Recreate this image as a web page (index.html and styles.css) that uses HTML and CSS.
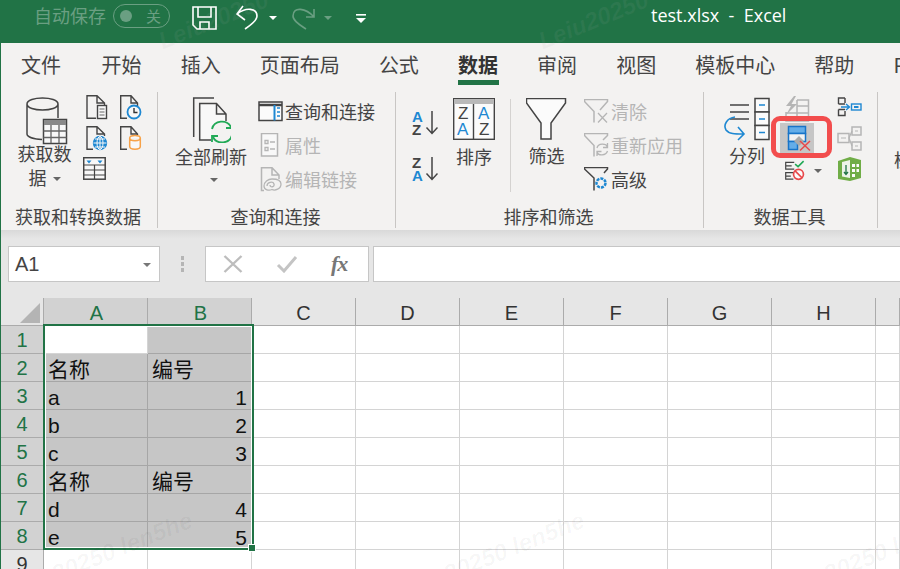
FILE: index.html
```html
<!DOCTYPE html>
<html lang="zh-CN">
<head>
<meta charset="utf-8">
<title>test.xlsx - Excel</title>
<link rel="stylesheet" href="styles.css">
</head>
<body>
<div class="app">
  <header class="titlebar">
    <span class="autosave">自动保存</span>
    <span class="toggle"><i class="toggle-dot"></i><span class="toggle-text">关</span></span>
    <svg class="qa-save" width="25" height="25" viewBox="192 6 25 25" fill="none" stroke="#fff" stroke-width="1.6"><path d="M193 7H216V29H197L193 25Z M198 7V17H211V7 M200 29V22H209V29"/></svg>
    <svg class="qa-undo" width="23" height="25" viewBox="236 5 23 25" fill="none" stroke="#fff" stroke-width="1.6"><path d="M243 6L237 14L245 20M237 14C246 7 257 8 257 16C257 20 251 25 245 29"/></svg>
    <i class="caret caret-white qa-c1"></i>
    <svg class="qa-redo" width="24" height="25" viewBox="291 5 24 25" fill="none" stroke="#6a9f82" stroke-width="1.6"><path d="M313 9V17H305M313 17C305 8 292 6 292 16C292 21 299 25 305 29"/></svg>
    <i class="caret caret-faint qa-c2"></i>
    <svg class="qa-more" width="10" height="9" viewBox="0 0 10 9"><rect width="10" height="1.6" fill="#fff"/><path d="M0 4H10L5 9Z" fill="#fff"/></svg>
    <span class="doc-title">test.xlsx  -  Excel</span>
  </header>

  <div class="shell">
    <nav class="tabs">
      <span>文件</span><span>开始</span><span>插入</span><span>页面布局</span><span>公式</span><span class="tab-on">数据</span><span>审阅</span><span>视图</span><span>模板中心</span><span>帮助</span><span>Power Pivot</span>
    </nav>

    <section class="ribbon">
      <div class="group g1">
        <div class="group-body">
          <div class="big big-get">
            <svg width="44" height="48" viewBox="27 97 44 48" fill="none" stroke="#444" stroke-width="1.5">
              <path d="M29 104C29 96 60 96 60 104C60 112 29 112 29 104ZM29 104V134C29 137 36 139 44 139.500M60 104V118"/>
              <rect x="45.500" y="119.500" width="23" height="24" fill="#f8f8f8"/>
              <rect x="46" y="120" width="22" height="5" fill="#8a8a8a" stroke="none"/>
              <path d="M45.500 131H68.500M45.500 137.500H68.500M53 125V143M61 125V143" stroke="#666" stroke-width="1.300"/>
            </svg>
            <span class="big-label narrow">获取数据<i class="caret caret-in"></i></span>
          </div>
          <div class="small-grid">
            <svg width="24" height="25" viewBox="85 95 24 25" fill="none" stroke="#444" stroke-width="1.4"><path d="M96 118.300H87V95.700H97L104.500 103V105M97 95.700V103H104.500"/><rect x="97.500" y="105.500" width="9" height="13" fill="#f8f8f8"/><path d="M99.500 109H104.500M99.500 112H104.500M99.500 115H104.500" stroke-width="1.100" stroke="#666"/></svg>
            <svg width="24" height="25" viewBox="119 95 24 25" fill="none" stroke="#444" stroke-width="1.4"><path d="M127 118.300H120.700V95.700H131L137.500 103V106M131 95.700V103H137.500"/><circle cx="134" cy="112" r="6.500" stroke="#1e88d2" stroke-width="1.800" fill="#f8f8f8"/><path d="M134 108V112.500H137.500" stroke="#333"/></svg>
            <svg width="24" height="25" viewBox="85 126 24 25" fill="none" stroke="#444" stroke-width="1.4"><path d="M93 149.300H87V126.700H97L104.500 134V136M97 126.700V134H104.500"/><circle cx="100" cy="143" r="6.500" fill="#1e88d2" stroke="#1e88d2"/><path d="M93.500 143H106.500M100 136.500V149.500M95 139H105M95 147H105" stroke="#f8f8f8" stroke-width="1"/><ellipse cx="100" cy="143" rx="3" ry="6.500" stroke="#f8f8f8" stroke-width="1"/></svg>
            <svg width="24" height="25" viewBox="119 126 24 25" fill="none" stroke="#444" stroke-width="1.4"><path d="M127 149.300H120.700V126.700H131L137.500 134V135M131 126.700V134H137.500"/><path d="M129.700 138C129.700 134.500 140.300 134.500 140.300 138V146.500C140.300 150 129.700 150 129.700 146.500ZM129.700 138C129.700 141.500 140.300 141.500 140.300 138" stroke="#f7a248" stroke-width="1.500" fill="#f8f8f8"/></svg>
            <svg class="small-wide" width="24" height="24" viewBox="83 157 24 24" fill="none" stroke="#444" stroke-width="1.500"><rect x="83.700" y="157.700" width="21.500" height="21.500" fill="#f8f8f8"/><path d="M83.700 165H105.200M83.700 170H105.200M83.700 175H105.200M94.500 165V179" stroke-width="1.200"/><path d="M86.500 160.500H91.500L89 163.500ZM97.500 160.500H102.500L100 163.500Z" fill="#1e88d2" stroke="none"/></svg>
          </div>
        </div>
        <div class="group-label">获取和转换数据</div>
      </div>

      <div class="group g2">
        <div class="group-body">
          <div class="big big-refresh">
            <svg width="40" height="46" viewBox="192 97 40 46" fill="none" stroke="#444" stroke-width="1.500">
              <path d="M215 98H194.700V137"/>
              <path d="M212 140H200.700V103.500H217.500L227 114V121M217.500 103.500V114H227" fill="#f8f8f8"/>
              <circle cx="223" cy="132" r="11" fill="#f3f2f1" stroke="none"/>
              <path d="M213 129C215 120 228 119 232 127M233 135C231 144 218 145 214 137" stroke="#21a956" stroke-width="1.800"/>
              <path d="M233 122V128H227M213 142V136H219" stroke="#21a956" stroke-width="1.800"/>
            </svg>
            <span class="big-label">全部刷新</span>
            <i class="caret caret-big"></i>
          </div>
          <div class="rows">
            <div class="row"><svg width="26" height="21" viewBox="258 101 26 21" fill="none" stroke="#444" stroke-width="1.500"><rect x="259" y="102" width="23" height="18.500" fill="#fbfbfb"/><path d="M259 105H282" stroke-width="2.500"/><path d="M274.500 105V120.500" stroke="#1e88d2" stroke-width="2"/><path d="M277 108H280M277 112H280M277 116H280" stroke="#1e88d2" stroke-width="1.500"/></svg><span>查询和连接</span></div>
            <div class="row row-off"><svg width="26" height="24" viewBox="258 134 26 24" fill="none" stroke="#b5b5b5" stroke-width="1.500"><rect x="261.500" y="134.500" width="16" height="22.500" fill="#f8f8f8"/><path d="M265 141.500H268V144.500H265ZM265 148.500H268V151.500H265ZM270 143H275M270 150H275" stroke-width="1.300"/></svg><span>属性</span></div>
            <div class="row row-off"><svg width="26" height="25" viewBox="258 168 26 25" fill="none" stroke="#b5b5b5" stroke-width="1.500"><path d="M264 191.500H261.500V168.700H272L279 176V180M272 168.700V176H279"/><path d="M267 187C267 183 273 182 274 185C275 188 270 189 270 186M281 185C281 190 275 192 272 190.500C269 192 264 191 264 187C264 183 268 180 272 180C277 180 281 181 281 185" stroke-width="1.300"/></svg><span>编辑链接</span></div>
          </div>
        </div>
        <div class="group-label">查询和连接</div>
      </div>

      <div class="group g3">
        <div class="group-body">
          <div class="sort-stack">
            <svg width="26" height="26" viewBox="0 0 26 26"><text x="0" y="12" class="svg-az az-blue">A</text><text x="0" y="24.500" class="svg-az az-dark">Z</text><path d="M20 1V23M14.500 17.500L20 23.500L25.500 17.500" fill="none" stroke="#444" stroke-width="1.500"/></svg>
            <svg width="26" height="26" viewBox="0 0 26 26"><text x="0" y="12" class="svg-az az-dark">Z</text><text x="0" y="24.500" class="svg-az az-blue">A</text><path d="M20 1V23M14.500 17.500L20 23.500L25.500 17.500" fill="none" stroke="#444" stroke-width="1.500"/></svg>
          </div>
          <div class="big big-sort">
            <svg width="42" height="42" viewBox="0 0 42 42"><rect x=".7" y=".7" width="40.600" height="40.600" fill="#fbfbfb" stroke="#444" stroke-width="1.400"/><rect x="1" y="1" width="40" height="5" fill="#b9b9b9"/><path d="M20.500 6V41" stroke="#444" stroke-width="1.400"/><text x="5" y="21" class="svg-za az-dark">Z</text><text x="4" y="37" class="svg-za az-blue">A</text><text x="25" y="21" class="svg-za az-blue">A</text><text x="26" y="37" class="svg-za az-dark">Z</text></svg>
            <span class="big-label">排序</span>
          </div>
          <i class="inner-sep"></i>
          <div class="big big-filter">
            <svg width="41" height="42" viewBox="526 98 41 42" fill="#fbfbfb" stroke="#444" stroke-width="1.500"><path d="M526.500 98.500H565.500V103L551 123V139H541V123L526.500 103Z"/></svg>
            <span class="big-label">筛选</span>
          </div>
          <div class="rows rows-filter">
            <div class="row row-off"><svg width="25" height="25" viewBox="584 99 25 25" fill="none" stroke="#b5b5b5" stroke-width="1.500"><path d="M594 122.500V111.500L584.500 101.500V99.500H607.500V101.500L600 110"/><path d="M598 113L607 122.500M607 113L598 122.500" stroke-width="1.300"/></svg><span>清除</span></div>
            <div class="row row-off"><svg width="25" height="25" viewBox="584 133 25 25" fill="none" stroke="#b5b5b5" stroke-width="1.500"><path d="M594 156.500V145.500L584.500 135.500V133.500H607.500V135.500L603 140"/><path d="M597 148C598 143 606 143 607.500 147M607.500 151C606 156 598 156 597 152M607.500 143V147.500H603M597 156V151.500H601.500" stroke-width="1.300"/></svg><span>重新应用</span></div>
            <div class="row"><svg width="25" height="25" viewBox="584 168 25 25" fill="none" stroke="#444" stroke-width="1.500"><path d="M594 191.500V179L584.500 170V168.500H607.500V170L604 174"/><circle cx="601" cy="184" r="4.500" stroke="#1e88d2" stroke-width="2.500" stroke-dasharray="3 1"/></svg><span>高级</span></div>
          </div>
        </div>
        <div class="group-label">排序和筛选</div>
      </div>

      <div class="group g4">
        <div class="group-body">
          <div class="big big-split">
            <svg width="48" height="44" viewBox="723 97 48 44" fill="none" stroke="#444" stroke-width="1.500">
              <path d="M730 105H749M730 112H749M730 119H749" stroke-width="1.400"/>
              <rect x="755" y="98.500" width="14" height="13.500" fill="#fbfbfb"/><rect x="755" y="112" width="14" height="13.500" fill="#fbfbfb"/><rect x="755" y="125.500" width="14" height="14" fill="#fbfbfb"/>
              <path d="M759 105H765M759 119H765M759 132.500H765" stroke="#1e88d2"/>
              <path d="M735 117C727 118 723 125 726 130C729 134 735 134 743 134M738 127L744 134L738 140" stroke="#1e88d2" stroke-width="1.600"/>
            </svg>
            <span class="big-label">分列</span>
          </div>
          <div class="tool-col">
            <svg class="tool" width="34" height="26" viewBox="780 96 34 26" fill="none" stroke="#b5b5b5" stroke-width="1.500"><path d="M797 100H808.500V121H786V112M786 113H808.500M797 100V121M808.500 106H797" /><path d="M794 96L786 106H791L786 115L797 104H791.500L796 96Z" fill="#b5b5b5" stroke="none"/></svg>
            <div class="tool-on">
              <svg width="34" height="30" viewBox="780 123 34 30" fill="none" stroke="#1874c8" stroke-width="1.500"><rect x="788.500" y="126.500" width="17" height="7" fill="#64ade8"/><rect x="788.500" y="133.500" width="17" height="8" fill="#f2f2f2"/><rect x="788.500" y="141.500" width="9" height="8" fill="#64ade8"/><path d="M794 141L799 136L804 141L799 146Z" fill="#aaa" stroke="none"/><path d="M800 141L810 150.500M810 141L800 150.500" stroke="#e8484a" stroke-width="1.500"/></svg>
            </div>
            <div class="tool-split">
              <svg width="34" height="23" viewBox="784 159 34 23" fill="none" stroke="#444" stroke-width="1.400"><path d="M796 161H786V169H796M786 165H793M796 173H786V180.500H795M786 177H792"/><path d="M797 163L800.500 166L807 159.500" stroke="#21a956" stroke-width="1.800"/><circle cx="801" cy="175" r="5.800" stroke="#e8484a" stroke-width="2" fill="#fbfbfb"/><path d="M797 171L805 179" stroke="#e8484a" stroke-width="2"/></svg>
              <i class="caret caret-tool"></i>
            </div>
          </div>
          <div class="tool-col tool-col2">
            <svg width="25" height="21" viewBox="837 96 25 21" fill="none" stroke="#444" stroke-width="1.400"><path d="M845 98H838.500V104M845 98M838.500 109.500V115.500H845V111M845 103V98M838.500 104H845M838.500 109.500H845"/><rect x="851.500" y="104" width="9.500" height="6" stroke="#1e88d2"/><rect x="854" y="106" width="4.500" height="2" fill="#1e88d2" stroke="none"/><path d="M841 107H849M846 104L849.500 107L846 110" stroke="#1e88d2"/></svg>
            <svg width="25" height="25" viewBox="837 126 25 25" fill="none" stroke="#b5b5b5" stroke-width="1.500"><rect x="838" y="133.500" width="11" height="9"/><rect x="852" y="127" width="9" height="8"/><rect x="852" y="142" width="9" height="8"/><path d="M841 138H846M855 131H858M855 146H858M849 138L852 131M849 138L852 146" stroke-width="1.200"/></svg>
            <svg class="tool-model" width="25" height="25" viewBox="837 157 25 25"><path d="M838 161L850 157L861 160V178L850 181L838 179Z" fill="#70ad47"/><path d="M842 162L850 160V178L842 176.500Z" fill="#fbfbfb" opacity=".9"/><path d="M846 165V174M844 172L846 174.500L848 172" fill="none" stroke="#217346" stroke-width="1.300"/><path d="M852 164H855V167H852ZM856.500 164H859V167H856.500ZM852 169H855V172H852ZM856.500 169H859V172H856.500ZM852 174H855V177H852Z" fill="#fbfbfb"/></svg>
          </div>
        </div>
        <div class="group-label">数据工具</div>
        <i class="callout"></i>
      </div>

      <div class="group g5">
        <div class="group-body"><span class="big-label next-label">模拟分析</span></div>
      </div>
    </section>

    <section class="formula">
      <div class="namebox"><span>A1</span><i class="caret caret-name"></i></div>
      <div class="grip"><i></i><i></i><i></i></div>
      <div class="fxbox">
        <svg width="24" height="18" viewBox="0 0 24 18" fill="none" stroke="#bdbdbd" stroke-width="2.400"><path d="M3.500 1L20.500 17M20.500 1L3.500 17"/></svg>
        <svg width="24" height="18" viewBox="0 0 24 18" fill="none" stroke="#c4c4c4" stroke-width="3"><path d="M3 10L9 16L21 2"/></svg>
        <span class="fx">fx</span>
      </div>
      <div class="input"></div>
    </section>

    <section class="sheet-wrap">
      <div class="sheet">
        <div class="hd corner"><svg width="20" height="20" viewBox="0 0 20 20"><path d="M20 0V20H0Z" fill="#b4b4b4"/></svg></div>
        <div class="hd col on">A</div><div class="hd col on">B</div><div class="hd col">C</div><div class="hd col">D</div><div class="hd col">E</div><div class="hd col">F</div><div class="hd col">G</div><div class="hd col">H</div><div class="hd col"></div>

        <div class="hd rowh on">1</div><div class="c"></div><div class="c sel"></div><div class="c"></div><div class="c"></div><div class="c"></div><div class="c"></div><div class="c"></div><div class="c"></div><div class="c"></div>
        <div class="hd rowh on">2</div><div class="c sel cjk">名称</div><div class="c sel cjk">编号</div><div class="c"></div><div class="c"></div><div class="c"></div><div class="c"></div><div class="c"></div><div class="c"></div><div class="c"></div>
        <div class="hd rowh on">3</div><div class="c sel">a</div><div class="c sel num">1</div><div class="c"></div><div class="c"></div><div class="c"></div><div class="c"></div><div class="c"></div><div class="c"></div><div class="c"></div>
        <div class="hd rowh on">4</div><div class="c sel">b</div><div class="c sel num">2</div><div class="c"></div><div class="c"></div><div class="c"></div><div class="c"></div><div class="c"></div><div class="c"></div><div class="c"></div>
        <div class="hd rowh on">5</div><div class="c sel">c</div><div class="c sel num">3</div><div class="c"></div><div class="c"></div><div class="c"></div><div class="c"></div><div class="c"></div><div class="c"></div><div class="c"></div>
        <div class="hd rowh on">6</div><div class="c sel cjk">名称</div><div class="c sel cjk">编号</div><div class="c"></div><div class="c"></div><div class="c"></div><div class="c"></div><div class="c"></div><div class="c"></div><div class="c"></div>
        <div class="hd rowh on">7</div><div class="c sel">d</div><div class="c sel num">4</div><div class="c"></div><div class="c"></div><div class="c"></div><div class="c"></div><div class="c"></div><div class="c"></div><div class="c"></div>
        <div class="hd rowh on">8</div><div class="c sel">e</div><div class="c sel num">5</div><div class="c"></div><div class="c"></div><div class="c"></div><div class="c"></div><div class="c"></div><div class="c"></div><div class="c"></div>
        <div class="hd rowh">9</div><div class="c"></div><div class="c"></div><div class="c"></div><div class="c"></div><div class="c"></div><div class="c"></div><div class="c"></div><div class="c"></div><div class="c"></div>
      </div>
      <div class="selection"><i class="handle"></i></div>
    </section>
  </div>

  <span class="wm wm1">Leiu20250</span>
  <span class="wm wm2">Leiu20250</span>
  <span class="wm wm3">20250 len5he</span>
  <span class="wm wm4">20250 len5he</span>
  <span class="wm wm5">20250 len5he</span>
</div>
</body>
</html>
```
FILE: styles.css
```css
* { box-sizing: border-box; }
html, body { margin: 0; padding: 0; background: #fff; }
body { font-family: "Noto Sans CJK SC", "Liberation Sans", sans-serif; }
i { display: block; font-style: normal; }

.app { position: relative; width: 900px; height: 569px; overflow: hidden; }

/* title bar */
.titlebar { display: flex; align-items: center; height: 43px; padding: 0 0 1px 35px; background: #217346; color: #fff; }
.autosave { font-size: 18px; color: #6a9f82; line-height: 24px; margin: 0 0 12px -1px; }
.toggle { display: flex; align-items: center; justify-content: space-between; width: 57px; height: 24px; margin: 0 0 10px 7px; padding: 0 8px 0 6px; border: 1px solid #6a9f82; border-radius: 12px; }
.toggle-dot { width: 12px; height: 12px; border-radius: 50%; background: #6a9f82; }
.toggle-text { font-size: 15px; color: #6a9f82; line-height: 20px; }
.qa-save { margin: 0 0 5px 22px; }
.qa-undo { margin: 0 0 7px 19px; }
.qa-c1 { margin: 0 0 6px 10px; }
.qa-redo { margin: 0 0 7px 15px; }
.qa-c2 { margin: 0 0 6px 8px; }
.qa-more { margin: 0 0 6px 24px; }
.doc-title { margin: 0 0 12px 285px; font: 18px/24px "Open Sans", "Liberation Sans", sans-serif; white-space: pre; }

.caret { width: 0; height: 0; border-style: solid; border-width: 4px 4px 0; border-color: #666 transparent transparent; }
.caret-white { border-top-color: #fff; }
.caret-faint { border-top-color: #6a9f82; }

/* shell */
.shell { border-left: 1px solid #217346; }

.tabs { display: flex; gap: 39.100px; height: 47px; padding: 8px 0 0 20px; background: #f3f2f1; font-size: 20px; line-height: 28px; color: #444; white-space: nowrap; }
.tabs span { flex: none; position: relative; height: 34px; }
.tabs span:first-child { margin-right: 1.500px; }
.tab-on { font-weight: 700; color: #333; }
.tab-on::after { content: ""; position: absolute; left: 0; right: -1px; bottom: 0; height: 5px; background: #217346; }

/* ribbon */
.ribbon { display: flex; height: 140px; background: #f3f2f1; color: #444; font-size: 18px; }
.group { position: relative; display: flex; flex-direction: column; flex: none; height: 136px; margin-top: 2px; border-right: 1px solid #c8c6c4; }
.g1 { width: 157px; }
.g2 { width: 238px; }
.g3 { width: 308px; }
.g4 { width: 174px; }
.g5 { width: 22px; border-right: 0; }
.group-body { display: flex; flex: 1; min-height: 0; }
.group-label { height: 24px; padding-right: 2px; text-align: center; line-height: 24px; font-size: 18px; white-space: nowrap; color: #444; }

.big { display: flex; flex-direction: column; align-items: center; flex: none; }
.big-label { display: block; line-height: 24px; text-align: center; }

.big-get { width: 62px; margin: 5px 0 0 13px; }
.big-get svg { margin-left: 3px; }
.big-get .big-label { margin-top: -4px; margin-left: -1px; }
.narrow { width: 56px; }
.caret-in { display: inline-block; margin: 0 0 3px 6px; vertical-align: middle; }

.small-grid { display: grid; grid-template-columns: 34px 34px; grid-auto-rows: 31px; margin: 3px 0 0 9px; }
.small-wide { margin-left: -2px; }

.big-refresh { width: 80px; margin: 5px 0 0 13px; }
.big-refresh .big-label { margin-top: 1px; }
.caret-big { margin: 10px 0 0 6px; }

.rows { display: flex; flex-direction: column; margin: 2px 0 0 7px; }
.row { display: flex; align-items: center; height: 34px; white-space: nowrap; color: #444; }
.row svg { flex: none; }
.row span { margin-left: 1px; }
.row-off { color: #b5b5b5; }

.sort-stack { display: flex; flex-direction: column; gap: 20px; margin: 18px 0 0 16px; }
.svg-az { font: 700 15px "Liberation Sans", sans-serif; }
.svg-za { font: 400 17px "Liberation Sans", sans-serif; }
.az-blue { fill: #1e88d2; }
.az-dark { fill: #444; }

.big-sort { margin: 6px 0 0 15px; }
.big-sort .big-label { margin-top: 4px; }
.inner-sep { width: 1px; height: 93px; margin: 7px 0 0 15px; background: #d4d2d0; }
.big-filter { width: 41px; margin: 6px 0 0 15px; }
.big-filter .big-label { margin-top: 3px; }
.rows-filter { margin: 2px 0 0 17px; }
.rows-filter .row span { margin-left: 2px; }

.big-split { width: 52px; margin: 5px 0 0 17px; }
.big-split .big-label { margin-top: 2px; }
.tool-col { display: flex; flex-direction: column; margin: 4px 0 0 7px; width: 42px; }
.tool { margin-bottom: 1px; }
.tool-on { width: 34px; height: 30px; background: #c6c6c6; }
.tool-on svg { display: block; }
.tool-split { display: flex; align-items: center; margin: 6px 0 0 4px; }
.caret-tool { margin-left: 1px; border-top-color: #666; }
.tool-col2 { margin: 4px 0 0 15px; width: 26px; gap: 9px; }
.tool-model { margin-top: -3px; }
.callout { position: absolute; left: 67px; top: 24px; width: 61px; height: 42px; border: 5px solid #f24d4d; border-radius: 9px; }
.next-label { margin: 55px 0 0 16px; white-space: nowrap; }

/* formula bar */
.formula { display: flex; align-items: stretch; height: 68px; padding: 16px 0 16px 7px; background: linear-gradient(#d9d9d9, #e6e6e6 9px); }
.namebox { display: flex; align-items: center; justify-content: space-between; width: 152px; padding: 1px 8px 0 6px; background: #fff; border: 1px solid #c6c6c6; font: 20px "Liberation Sans", sans-serif; color: #444; }
.caret-name { border-top-color: #777; }
.grip { display: flex; flex-direction: column; justify-content: center; gap: 2px; width: 45px; align-items: center; margin-left: 0; }
.grip i { width: 3px; height: 4px; background: #b5b5b5; }
.fxbox { display: flex; align-items: center; gap: 30px; width: 164px; padding: 0 0 0 15px; background: #fff; border: 1px solid #c6c6c6; }
.fx { margin-left: 2px; font: italic 700 22px "Liberation Serif", serif; color: #777; line-height: 24px; letter-spacing: -1px; }
.input { flex: 1; margin-left: 4px; background: #fff; border: 1px solid #c6c6c6; border-right: 0; }

/* sheet */
.sheet-wrap { position: relative; height: 271px; background: #fff; overflow: hidden; }
.sheet { display: grid; grid-template-columns: 43px repeat(8, 104px) 24px; grid-template-rows: 28px repeat(9, 28px); background: #fff; font: 20px "Liberation Sans", sans-serif; color: #111; }
.hd { display: flex; align-items: center; justify-content: center; background: #e6e6e6; border-right: 1px solid #ababab; border-bottom: 1px solid #ababab; color: #333; }
.corner { justify-content: flex-end; padding: 3px 3px 0 0; }
.corner svg { display: block; }
.col { padding-top: 3px; }
.col.on { padding-left: 2px; background: #d2d2d2; color: #217346; border-bottom-color: #217346; }
.rowh { border-right-color: #ababab; border-bottom-color: #c6c6c6; padding-top: 2px; }
.rowh.on { background: #d2d2d2; color: #217346; border-right-color: #217346; border-bottom-color: #ababab; }
.c { display: flex; align-items: flex-end; padding: 0 4px; border-right: 1px solid #d4d4d4; border-bottom: 1px solid #d4d4d4; font-size: 21px; line-height: 22px; white-space: nowrap; }
.sel { background: #c6c6c6; border-color: #a6a6a6; }
.cjk { font-family: "Noto Sans CJK SC", sans-serif; font-size: 21px; padding-left: 4px; align-items: center; line-height: 28px; }
.num { justify-content: flex-end; }

.selection { position: absolute; left: 42px; top: 26px; width: 211px; height: 226px; border: 2px solid #217346; box-shadow: inset 0 0 0 1px #fff; }
.handle { position: absolute; right: -4px; bottom: -4px; width: 8px; height: 8px; background: #217346; border: 1px solid #fff; }

/* watermark */
.wm { position: absolute; font: italic 700 24px "Liberation Sans", sans-serif; white-space: nowrap; transform: rotate(-22deg); transform-origin: left bottom; pointer-events: none; }
.wm1, .wm2 { color: rgba(170,170,170,.09); }
.wm3, .wm4, .wm5 { color: rgba(0,0,0,.035); }
.wm1 { left: 165px; top: 27px; }
.wm2 { left: 545px; top: 27px; }
.wm3 { left: 58px; top: 560px; }
.wm4 { left: 450px; top: 560px; }
.wm5 { left: 830px; top: 560px; }
```
